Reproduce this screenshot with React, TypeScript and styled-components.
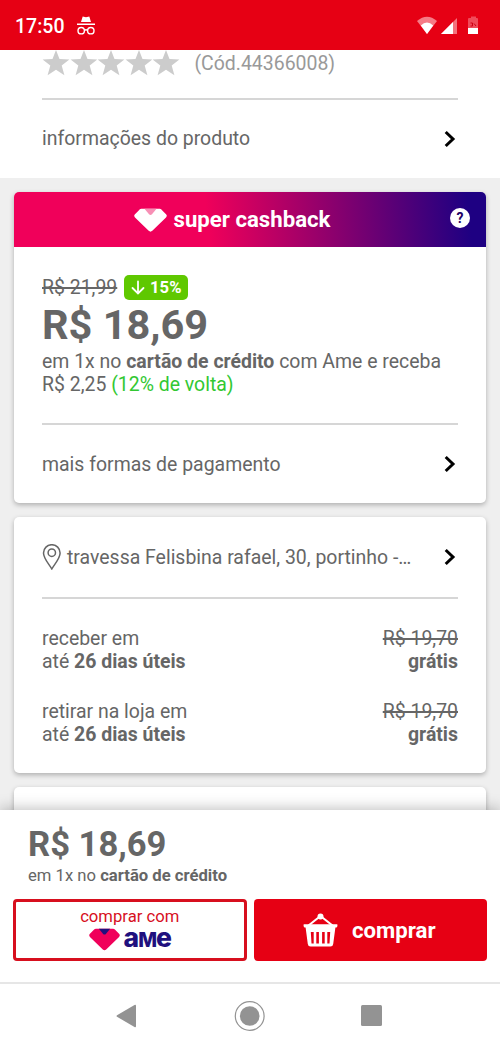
import React from "react";
import styled, { createGlobalStyle } from "styled-components";

const GlobalStyle = createGlobalStyle`
  * { box-sizing: border-box; }
  body { margin: 0; background: #efefef; font-family: Roboto, "Liberation Sans", sans-serif; color: #666; }
  button { font: inherit; padding: 0; cursor: pointer; }
  svg { display: block; flex: none; }
`;

const Screen = styled.div`
  width: 500px;
  height: 1049px;
  display: flex;
  flex-direction: column;
  overflow: hidden;
  background: #efefef;
  font-size: 19.44px;
  line-height: 23px;
`;

const StatusBar = styled.header`
  height: 50px;
  flex: none;
  display: flex;
  align-items: center;
  justify-content: space-between;
  padding: 2px 20px 0 15px;
  background: #e60014;
  color: #fff;
`;

const StatusGroup = styled.div<{ $gap: number }>`
  display: flex;
  align-items: center;
  gap: ${(p) => p.$gap}px;
`;

const Clock = styled.span`
  font-size: 19.5px;
  font-weight: 500;
`;

const Content = styled.main`
  flex: 1;
  min-height: 0;
  overflow: hidden;
`;

const ProductPanel = styled.section`
  height: 128px;
  padding: 0 42px;
  background: #fff;
`;

const Rating = styled.div`
  height: 47.5px;
  display: flex;
  align-items: flex-start;
  color: #999;
`;

const Stars = styled.div`
  display: flex;
  margin-right: 14.5px;
`;

const Code = styled.span`
  padding-top: 2px;
`;

const Divider = styled.hr`
  height: 2px;
  margin: 0;
  border: 0;
  background: #d6d6d6;
`;

const LinkRow = styled.div<{ $height: number }>`
  height: ${(p) => p.$height}px;
  display: flex;
  align-items: center;
  justify-content: space-between;
`;

const Card = styled.section<{ $height: number }>`
  height: ${(p) => p.$height}px;
  margin: 14px 14px 0;
  border-radius: 5px;
  background: #fff;
  box-shadow: 0 2px 5px rgba(0, 0, 0, 0.27);
`;

const CardBody = styled.div`
  padding: 0 28px;
`;

const CashbackHeader = styled.div`
  height: 55px;
  display: grid;
  grid-template-columns: 1fr 36px;
  align-items: center;
  border-radius: 5px 5px 0 0;
  background: linear-gradient(84deg, #f0005a 41%, #1e0082 96%);
  color: #fff;
`;

const CashbackTitle = styled.h2`
  margin: 0;
  display: flex;
  justify-content: center;
  align-items: center;
  gap: 7px;
  font-size: 22.2px;
  font-weight: 700;
`;

const Help = styled.span`
  width: 20px;
  height: 20px;
  margin-top: -4px;
  border-radius: 50%;
  background: #fff;
  color: #1e0064;
  font-size: 14px;
  font-weight: 700;
  line-height: 20px;
  text-align: center;
`;

const OldPriceRow = styled.div`
  display: flex;
  align-items: center;
  gap: 7px;
  padding-top: 28px;
`;

const Struck = styled.s`
  text-decoration-thickness: 1.5px;
`;

const Discount = styled.span`
  width: 64px;
  height: 25px;
  display: flex;
  align-items: center;
  justify-content: center;
  gap: 5px;
  border-radius: 5px;
  background: #5fc800;
  color: #fff;
  font-size: 16.6px;
  font-weight: 700;
`;

const Price = styled.div<{ $size: number; $line: number }>`
  font-size: ${(p) => p.$size}px;
  line-height: ${(p) => p.$line}px;
  font-weight: 700;
`;

const Terms = styled.p`
  margin: 0 0 27px;
  white-space: nowrap;
`;

const Cashback = styled.span`
  color: #32c832;
`;

const Address = styled.span`
  display: flex;
  align-items: center;
  gap: 5px;
`;

const Delivery = styled.div<{ $top: number }>`
  display: flex;
  justify-content: space-between;
  padding-top: ${(p) => p.$top}px;
`;

const Cost = styled.div`
  text-align: right;
`;

const BuyBar = styled.footer`
  position: relative;
  flex: none;
  height: 172px;
  padding: 14px 13px 0;
  background: #fff;
  box-shadow: 0 -1px 14px rgba(0, 0, 0, 0.27);
`;

const Summary = styled.div`
  padding-left: 15px;
  height: 75px;
  font-size: 16.66px;
`;

const Actions = styled.div`
  display: grid;
  grid-template-columns: 1fr 1fr;
  gap: 7px;
`;

const AmeButton = styled.button`
  height: 62px;
  display: flex;
  flex-direction: column;
  align-items: center;
  border: 3px solid #d70f1e;
  border-radius: 4px;
  background: #fff;
  color: #d70f1e;
  font-size: 16.66px;
  line-height: 20px;
  padding-top: 5px;
`;

const AmeLogo = styled.span`
  display: flex;
  align-items: flex-start;
  gap: 4px;
  padding-top: 1px;
`;

const AmeWord = styled.b`
  color: #20107e;
  font-family: Inter, sans-serif;
  font-size: 26.5px;
  font-weight: 800;
  line-height: 20px;
  letter-spacing: -1px;
  margin-top: -1px;
`;

const AmeCap = styled.span`
  font-size: 20px;
  text-transform: uppercase;
`;

const BuyButton = styled.button`
  height: 62px;
  display: flex;
  align-items: center;
  justify-content: center;
  gap: 14px;
  padding-right: 2px;
  border: 0;
  border-radius: 4px;
  background: #e60014;
  color: #fff;
  font-size: 22.2px;
  font-weight: 700;
`;

const NavBar = styled.nav`
  position: relative;
  flex: none;
  height: 67px;
  display: flex;
  justify-content: space-between;
  align-items: center;
  padding: 0 118.5px 2px 116px;
  border-top: 2px solid #e6e6e6;
  background: #fff;
`;

const Star = () => (
  <svg width="27.6" height="27" viewBox="0 0 27.6 27" fill="#ccc">
    <path d="M14 0l3.500 9.100 9.900.4-7.700 6.100 2.700 9.600-8.400-5.400-8.400 5.400 2.700-9.600L.6 9.500l9.900-.4z" />
  </svg>
);

const Chevron = () => (
  <svg width="14" height="18" viewBox="0 0 14 18" fill="none" stroke="#000" strokeWidth="3">
    <path d="M1.700 2l7.300 7-7.300 7" />
  </svg>
);

const Incognito = () => (
  <svg width="20" height="20" viewBox="0 0 20 20" fill="#fff">
    <path d="M6.700.5L10 1.200l3.300-.7L15 6H5zM1 7.500h18v1.600H1z" />
    <g fill="none" stroke="#fff" strokeWidth="1.400">
      <circle cx="5.200" cy="14.700" r="3.200" />
      <circle cx="14.800" cy="14.700" r="3.200" />
      <path d="M8.400 14.300q1.600-1 3.200 0" />
    </g>
  </svg>
);

const SignalIcons = () => (
  <svg width="64" height="20" viewBox="0 0 64 20">
    <path d="M1 5Q11-3.500 21 5L11 18z" fill="#f57b86" />
    <path d="M4.800 9.500Q11 3.500 17.200 9.500L11 18z" fill="#fff" />
    <path d="M25 18L41 2v16z" fill="#f3717c" />
    <path d="M25 18L37 6v12z" fill="#fff" />
    <path d="M52 12V3q0-1 1-1h2V.500h5V2h1q1 0 1 1v9z" fill="#f04b5a" />
    <path d="M54.500 7h2v3h-2M58 7.500l2 2.500" fill="none" stroke="#cc0014" />
    <path d="M52 12h10v6H52z" fill="#fff" />
  </svg>
);

const Heart = ({ width, main, notch }: { width: number; main: string; notch: string }) => (
  <svg width={width} height={(width * 24) / 33} viewBox="0 0 33 24">
    <path
      d="M8 .8h17c1.200 0 2 .3 2.800 1.100l4.200 4.300c1.100 1.100 1 2.300 0 3.300L18.300 22.800c-1.200 1.100-2.400 1.100-3.600 0L1 9.500C0 8.500-.1 7.300 1 6.200l4.200-4.300C6 1.100 6.800.8 8 .8z"
      fill={main}
    />
    <path d="M10.500.8h12L18 6.300q-1.500 1.400-3 0z" fill={notch} />
  </svg>
);

const ArrowDown = () => (
  <svg width="14" height="15" viewBox="0 0 14 15" fill="none" stroke="#fff" strokeWidth="1.800" strokeLinecap="round">
    <path d="M7 1.500v12M1.500 8L7 13.500 12.500 8" />
  </svg>
);

const Pin = () => (
  <svg width="20" height="26" viewBox="0 0 20 26" fill="none" stroke="#666" strokeWidth="1.500">
    <path d="M9.800 25C7 20 1.500 14.500 1.500 9A8.300 8.300 0 0118.100 9C18.100 14.500 12.600 20 9.800 25z" />
    <circle cx="9.800" cy="8.700" r="3.700" />
  </svg>
);

const Basket = () => (
  <svg width="35" height="34" viewBox="0 0 35 34">
    <path d="M5.500 12.500L17.500 3l12 9.500" fill="none" stroke="#fff" strokeWidth="2.100" />
    <circle cx="17.500" cy="3.400" r="3" fill="#fff" />
    <path
      fill="#fff"
      fillRule="evenodd"
      d="M1.200 11.300h32.600q.8 0 .7.800l-.3 1.600q-.2.800-1 .8h-.8L30.200 31q-.3 2.500-2.800 2.500H7.600Q5.100 33.500 4.800 31L2.600 14.500h-.8q-.8 0-1-.8l-.3-1.600q-.1-.8.700-.8zM7.800 19l.7 11.500h2.200V19zM13.300 19v11.500h2.600V19zM19.100 19v11.500h2.600V19zM24.300 19v11.500h2.200L27.200 19z"
    />
  </svg>
);

const BackIcon = () => (
  <svg width="21" height="24" viewBox="0 0 21 24">
    <path d="M1 11.200L18.500 1q1.500-.6 1.500.8v20.400q0 1.400-1.500.8L1 12.800q-1-.8 0-1.600z" fill="#939393" />
  </svg>
);

const HomeIcon = () => (
  <svg width="32" height="32" viewBox="0 0 32 32">
    <circle cx="16.700" cy="16" r="14.400" fill="none" stroke="#939393" strokeWidth="1.200" />
    <circle cx="16.700" cy="16" r="9.800" fill="#939393" />
  </svg>
);

const RecentIcon = () => (
  <svg width="21" height="21" viewBox="0 0 21 21">
    <rect width="21" height="21" rx="1.500" fill="#939393" />
  </svg>
);

const deliveries = [
  { label: "receber em", top: 28 },
  { label: "retirar na loja em", top: 27 },
];

export default function App() {
  return (
    <Screen>
      <GlobalStyle />
      <StatusBar>
        <StatusGroup $gap={12}>
          <Clock>17:50</Clock>
          <Incognito />
        </StatusGroup>
        <SignalIcons />
      </StatusBar>
      <Content>
        <ProductPanel>
          <Rating>
            <Stars>
              {[0, 1, 2, 3, 4].map((i) => (
                <Star key={i} />
              ))}
            </Stars>
            <Code>(Cód.44366008)</Code>
          </Rating>
          <Divider />
          <LinkRow $height={78}>
            informações do produto
            <Chevron />
          </LinkRow>
        </ProductPanel>
        <Card $height={311}>
          <CashbackHeader>
            <CashbackTitle>
              <Heart width={33} main="#fff" notch="#f78fb5" />
              super cashback
            </CashbackTitle>
            <Help>?</Help>
          </CashbackHeader>
          <CardBody>
            <OldPriceRow>
              <Struck>R$ 21,99</Struck>
              <Discount>
                <ArrowDown />
                15%
              </Discount>
            </OldPriceRow>
            <Price $size={41.5} $line={50}>R$ 18,69</Price>
            <Terms>
              em 1x no <b>cartão de crédito</b> com Ame e receba
              <br />
              R$ 2,25 <Cashback>(12% de volta)</Cashback>
            </Terms>
            <Divider />
            <LinkRow $height={78}>
              mais formas de pagamento
              <Chevron />
            </LinkRow>
          </CardBody>
        </Card>
        <Card $height={256}>
          <CardBody>
            <LinkRow $height={80}>
              <Address>
                <Pin />
                travessa Felisbina rafael, 30, portinho -…
              </Address>
              <Chevron />
            </LinkRow>
            <Divider />
            {deliveries.map((d) => (
              <Delivery key={d.label} $top={d.top}>
                <div>
                  {d.label}
                  <br />
                  até <b>26 dias úteis</b>
                </div>
                <Cost>
                  <Struck>R$ 19,70</Struck>
                  <br />
                  <b>grátis</b>
                </Cost>
              </Delivery>
            ))}
          </CardBody>
        </Card>
        <Card $height={60} />
      </Content>
      <BuyBar>
        <Summary>
          <Price $size={34.6} $line={40}>R$ 18,69</Price>
          em 1x no <b>cartão de crédito</b>
        </Summary>
        <Actions>
          <AmeButton>
            comprar com
            <AmeLogo>
              <Heart width={31} main="#f0005a" notch="#20107e" />
              <AmeWord>
                a<AmeCap>m</AmeCap>e
              </AmeWord>
            </AmeLogo>
          </AmeButton>
          <BuyButton>
            <Basket />
            comprar
          </BuyButton>
        </Actions>
      </BuyBar>
      <NavBar>
        <BackIcon />
        <HomeIcon />
        <RecentIcon />
      </NavBar>
    </Screen>
  );
}
